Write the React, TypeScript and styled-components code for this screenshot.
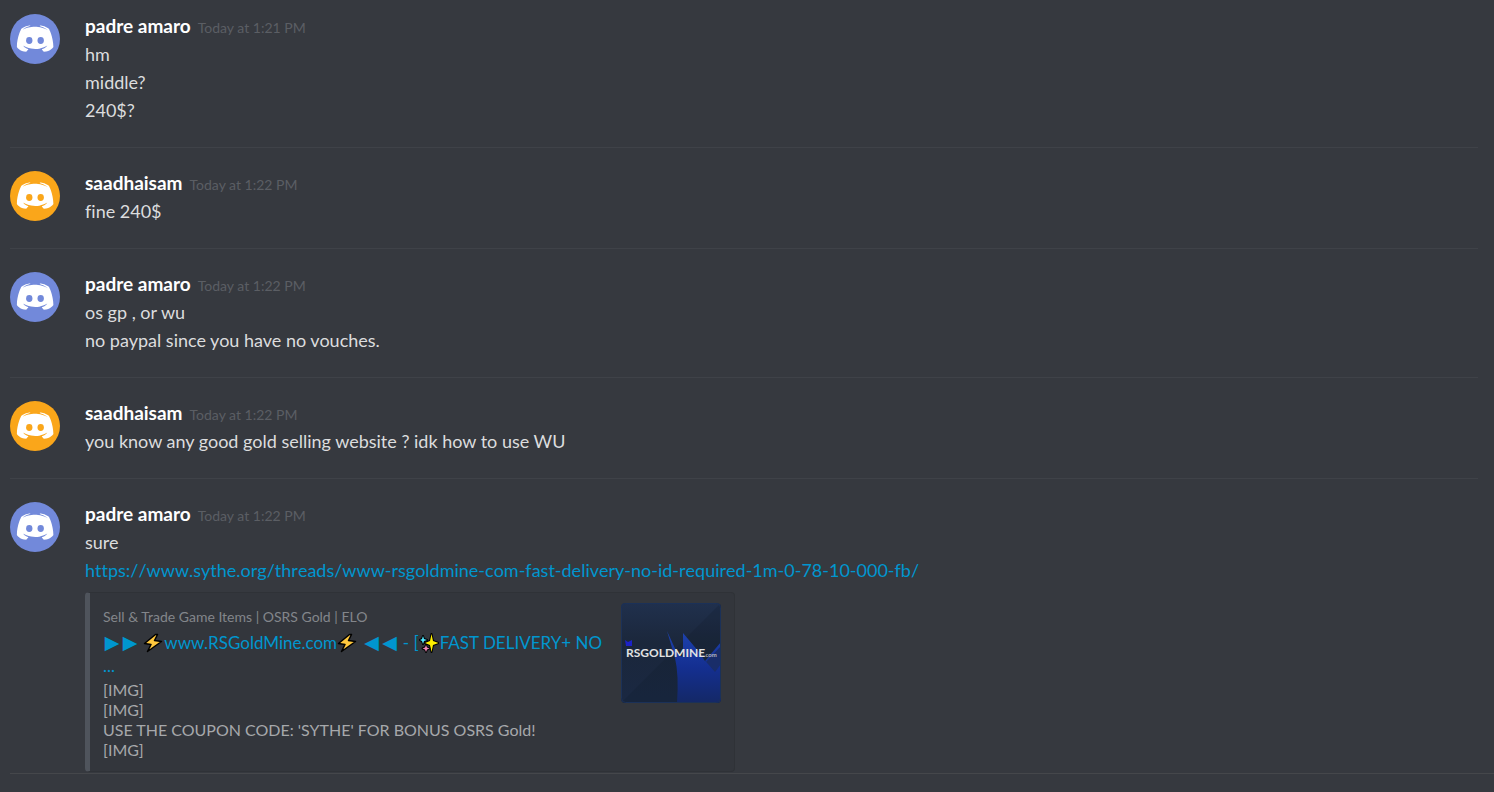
import React from "react";
import styled, { createGlobalStyle } from "styled-components";

const GlobalStyle = createGlobalStyle`
  * { box-sizing: border-box; }
  body {
    margin: 0;
    background: #36393f;
    color: #dcddde;
    font: 18px/28px Lato, "Noto Sans", sans-serif;
    font-variant-ligatures: none;
  }
`;

const FACE =
  "M150.9 150.6s-3.6-4.3-6.6-8.1c13.1-3.7 18.1-11.9 18.1-11.9-4.1 2.7-8 4.6-11.5 5.9-5 2.1-9.8 3.5-14.5 4.3-9.6 1.8-18.4 1.3-25.9-.1-5.7-1.1-10.6-2.7-14.7-4.3-2.3-.9-4.8-2-7.3-3.4-.3-.2-.6-.3-.9-.5-.2-.1-.3-.2-.4-.3-1.8-1-2.8-1.7-2.8-1.7s4.8 8 17.5 11.8c-3 3.8-6.7 8.3-6.7 8.3-22.1-.7-30.5-15.2-30.5-15.2 0-32.2 14.4-58.3 14.4-58.3 14.4-10.8 28.1-10.5 28.1-10.5l1 1.2c-18 5.2-26.3 13.1-26.3 13.1s2.2-1.2 5.9-2.9c10.7-4.7 19.2-6 22.7-6.3.6-.1 1.1-.2 1.7-.2 6.1-.8 13-1 20.2-.2 9.5 1.1 19.7 3.9 30.1 9.6 0 0-7.9-7.5-24.9-12.7l1.4-1.6s13.7-.3 28.1 10.5c0 0 14.4 26.1 14.4 58.3 0 0-8.5 14.5-30.6 15.2z";

const Log = styled.main`
  display: flex;
  flex-direction: column;
  padding-left: 10px;
`;

const Group = styled.section`
  display: flex;
  gap: 25px;
  margin-right: 16px;
  padding: 21px 0 23px;
  border-bottom: 1px solid #3f4248;
  &:first-child { padding-top: 12px; }
  &:last-child { margin-right: 0; padding-bottom: 1px; border-color: #45474b; }
`;

const AvatarSvg = styled.svg`
  flex: none;
  width: 50px;
  height: 50px;
  margin-top: 2px;
`;

const Body = styled.div`
  flex: 1;
  min-width: 0;
`;

const Header = styled.h2`
  display: flex;
  align-items: baseline;
  gap: 7px;
  height: 28px;
  margin: 0;
  font-size: 19px;
  line-height: 28px;
`;

const Name = styled.span`
  color: #fff;
  font-weight: 700;
`;

const Time = styled.time`
  color: #5b5e64;
  font-size: 14px;
  font-weight: 400;
  line-height: 20px;
`;

const Line = styled.p`
  margin: 0;
`;

const Link = styled.a`
  color: #0096cf;
  text-decoration: none;
`;

const UrlLink = styled(Link)`
  font-kerning: none;
  overflow-wrap: anywhere;
`;

const Embed = styled.article`
  display: flex;
  justify-content: space-between;
  gap: 16px;
  max-width: 650px;
  min-height: 180px;
  margin-top: 8px;
  padding: 10px 13px;
  border: 1px solid #2f3237;
  border-left: 5px solid #4f545c;
  border-radius: 4px;
  background: #33363c;
`;

const EmbedText = styled.div`
  flex: 1;
  min-width: 0;
  padding-top: 4px;
`;

const Provider = styled.div`
  color: #83868b;
  font-size: 14px;
  line-height: 20px;
`;

const Title = styled.h3`
  margin: 4px 0 3px;
  font-size: 17px;
  font-weight: 400;
  line-height: 23px;
`;

const Arrow = styled.span`
  display: inline-block;
  width: 18px;
  font-family: "DejaVu Sans", sans-serif;
  font-size: 19px;
  line-height: 16px;
  text-align: center;
`;

const Emoji = styled.svg`
  width: 20px;
  height: 20px;
  margin: -4px 1px -4px 0;
  vertical-align: 0;
`;

const Description = styled.p`
  margin: 0;
  color: #a6a8ab;
  font-size: 16px;
  line-height: 20px;
`;

const Thumb = styled.svg`
  flex: none;
  width: 100px;
  height: 100px;
  border-radius: 4px;
`;

const ThumbText = styled.text`
  font-family: Lato, sans-serif;
  font-weight: 700;
`;

function Avatar({ color }: { color: string }) {
  return (
    <AvatarSvg viewBox="42.7 30 160 160" aria-hidden="true">
      <circle cx="122.7" cy="110" r="80" fill={color} />
      <path d={FACE} fill="#fff" />
      <ellipse cx="104.4" cy="115" rx="10.2" ry="11.1" fill={color} />
      <ellipse cx="140.9" cy="115" rx="10.2" ry="11.1" fill={color} />
    </AvatarSvg>
  );
}

function Bolt() {
  return (
    <Emoji viewBox="0 0 20 20" role="img" aria-label="lightning">
      <path
        d="M12.500 1.500 1.500 10.500 8 11.500 4.500 18.500 18.500 8.500 11.500 7.500 14.500 1.500z"
        fill="#ffc83d"
        stroke="#000"
        strokeWidth="1.500"
        strokeLinejoin="round"
      />
    </Emoji>
  );
}

function Sparkles() {
  return (
    <Emoji viewBox="0 0 20 20" role="img" aria-label="sparkles">
      <g stroke="#000" strokeWidth="2" strokeLinejoin="round" paintOrder="stroke">
        <path d="M12.500 1 14 8 19.500 10 14 12 12.500 19 11 12 6 10 11 8z" fill="#fff100" />
        <path d="M4 3 5 6 8 7 5 8 4 11 3 8 1 7 3 6z" fill="#50e6ff" />
        <path d="M7 12 8 14.500 10.500 15.500 8 16.500 7 19 6 16.500 3.500 15.500 6 14.500z" fill="#ef87b5" />
      </g>
    </Emoji>
  );
}

function Thumbnail() {
  return (
    <Thumb viewBox="0 0 100 100" role="img" aria-label="RSGoldMine.com">
      <defs>
        <linearGradient id="night" x1="0" y1="0" x2="0" y2="1">
          <stop offset="0" stopColor="#20304d" />
          <stop offset="0.4" stopColor="#1b273b" />
          <stop offset="1" stopColor="#1a2842" />
        </linearGradient>
        <linearGradient id="crown" x1="0" y1="0" x2="0" y2="1">
          <stop offset="0" stopColor="#1d42ae" />
          <stop offset="0.5" stopColor="#142f91" />
          <stop offset="1" stopColor="#142866" />
        </linearGradient>
      </defs>
      <rect width="100" height="100" fill="url(#night)" />
      <path d="M100 0V100H0z" fill="#10192a" opacity="0.2" />
      <path d="M46 28 57 52 62 54 62 30 78 49 84 58 100 39V100H56Q58 72 54 55z" fill="url(#crown)" />
      <path d="M80 53 85 59 100 43V61L94 69z" fill="#192d69" />
      <path d="M4 37 7 39 11 37V43H5z" fill="#1c22c8" />
      <ThumbText x="5" y="54" fill="#e1e2e3" fontSize="12">RSGOLDMINE</ThumbText>
      <ThumbText x="83" y="54" fill="#b5b8c0" fontSize="6">.com</ThumbText>
      <rect x="0.500" y="0.500" width="99" height="99" rx="4" fill="none" stroke="#1b3158" />
    </Thumb>
  );
}

type Author = { name: string; color: string };
const padre: Author = { name: "padre amaro", color: "#7289da" };
const saad: Author = { name: "saadhaisam", color: "#faa61a" };

const groups: { author: Author; time: string; lines: string[]; url?: string }[] = [
  { author: padre, time: "1:21 PM", lines: ["hm", "middle?", "240$?"] },
  { author: saad, time: "1:22 PM", lines: ["fine 240$"] },
  { author: padre, time: "1:22 PM", lines: ["os gp , or wu", "no paypal since you have no vouches."] },
  { author: saad, time: "1:22 PM", lines: ["you know any good gold selling website ? idk how to use WU"] },
  {
    author: padre,
    time: "1:22 PM",
    lines: ["sure"],
    url: "https://www.sythe.org/threads/www-rsgoldmine-com-fast-delivery-no-id-required-1m-0-78-10-000-fb/",
  },
];

export default function App() {
  return (
    <>
      <GlobalStyle />
      <Log>
        {groups.map((group, i) => (
          <Group key={i}>
            <Avatar color={group.author.color} />
            <Body>
              <Header>
                <Name>{group.author.name}</Name>
                <Time>Today at {group.time}</Time>
              </Header>
              {group.lines.map((line) => (
                <Line key={line}>{line}</Line>
              ))}
              {group.url && (
                <>
                  <Line>
                    <UrlLink href={group.url}>{group.url}</UrlLink>
                  </Line>
                  <Embed>
                    <EmbedText>
                      <Provider>Sell &amp; Trade Game Items | OSRS Gold | ELO</Provider>
                      <Title>
                        <Link href={group.url}>
                          <Arrow>▶</Arrow><Arrow>▶</Arrow> <Bolt />www.RSGoldMine.com<Bolt />{" "}
                          <Arrow>◀</Arrow><Arrow>◀</Arrow> - [<Sparkles />FAST DELIVERY+ NO
                          <br />
                          ...
                        </Link>
                      </Title>
                      <Description>
                        [IMG]
                        <br />
                        [IMG]
                        <br />
                        USE THE COUPON CODE: 'SYTHE' FOR BONUS OSRS Gold!
                        <br />
                        [IMG]
                      </Description>
                    </EmbedText>
                    <Thumbnail />
                  </Embed>
                </>
              )}
            </Body>
          </Group>
        ))}
      </Log>
    </>
  );
}
